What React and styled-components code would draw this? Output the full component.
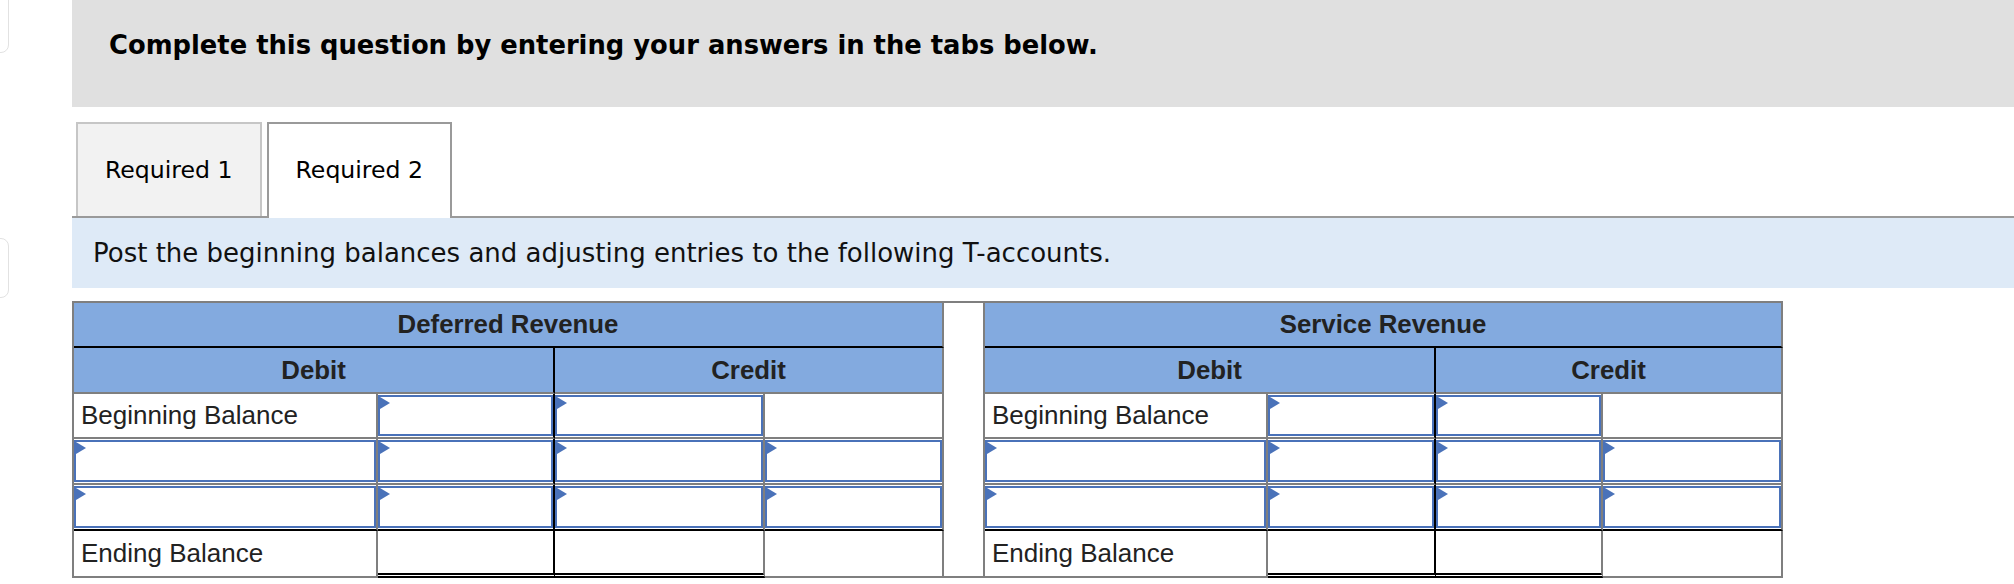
import React from "react";
import styled, { createGlobalStyle } from "styled-components";

const GlobalStyle = createGlobalStyle`
  html, body {
    margin: 0;
    padding: 0;
    background: #fff;
  }
  body {
    font-family: "DejaVu Sans", Verdana, sans-serif;
    overflow: hidden;
  }
`;

const Page = styled.div`
  display: flex;
  align-items: flex-start;
  width: 2014px;
`;

const Rail = styled.div`
  width: 72px;
  flex-shrink: 0;
  display: flex;
  flex-direction: column;
`;

const RailCard = styled.div`
  box-sizing: border-box;
  width: 49px;
  height: ${(p) => p.$h}px;
  margin-left: -40px;
  margin-top: ${(p) => p.$top}px;
  border: 1px solid #e2e2e2;
  border-radius: 8px;
  background: #fff;
`;

const Main = styled.div`
  flex: 1;
  min-width: 0;
`;

const Banner = styled.div`
  box-sizing: border-box;
  height: 107px;
  padding: 30px 0 0 37px;
  background: #e0e0e0;
  font-size: 25.8px;
  line-height: 30px;
  font-weight: bold;
  color: #000;
`;

const TabBar = styled.div`
  display: flex;
  align-items: flex-end;
  gap: 5px;
  margin-top: 15px;
  padding-left: 4px;
  border-bottom: 2px solid #9a9a9a;
`;

const Tab = styled.div`
  box-sizing: border-box;
  display: flex;
  align-items: center;
  height: ${(p) => (p.$active ? 96 : 94)}px;
  margin-bottom: ${(p) => (p.$active ? -2 : 0)}px;
  padding: 0 27px ${(p) => (p.$active ? 2 : 0)}px;
  border: 2px solid ${(p) => (p.$active ? "#9a9a9a" : "#c6c6c6")};
  border-bottom: none;
  background: ${(p) => (p.$active ? "#fff" : "#f2f2f2")};
  font-size: 23.6px;
  color: #000;
`;

const Prompt = styled.div`
  box-sizing: border-box;
  display: flex;
  align-items: center;
  height: 70px;
  padding-left: 21px;
  background: #deeaf7;
  font-size: 26px;
  color: #111;
`;

const TGrid = styled.div`
  display: grid;
  grid-template-columns: 304px 177px 210px 179px 41px 283px 168px 167px 180px;
  grid-template-rows: 45px 46px 45px 46px 46px 47px;
  width: max-content;
  margin-top: 13px;
  border-top: 2px solid #7f7f7f;
  border-left: 2px solid #7f7f7f;
  font-family: "Liberation Sans", Arial, sans-serif;
  font-size: 26px;
  color: #222;
`;

const Cell = styled.div`
  box-sizing: border-box;
  display: flex;
  align-items: center;
  min-width: 0;
  white-space: nowrap;
  background: #fff;
  border-right: 2px solid ${(p) => (p.$divider ? "#000" : "#7f7f7f")};
  border-bottom: ${(p) =>
    p.$double ? "5px double #000" : `2px solid ${p.$rule ? "#000" : "#7f7f7f"}`};
  padding: ${(p) => (p.$field ? "1px 0 1px 0" : "0 0 0 7px")};
`;

const HeadCell = styled(Cell)`
  grid-column: span ${(p) => p.$span};
  justify-content: center;
  padding: 0;
  background: #83aadf;
  font-weight: bold;
  font-size: 25.8px;
`;

const Spacer = styled.div`
  grid-column: 5;
  grid-row: 1 / span 6;
  box-sizing: border-box;
  background: #fff;
  border-right: 2px solid #7f7f7f;
  border-bottom: 2px solid #7f7f7f;
`;

const FieldWrap = styled.div`
  position: relative;
  width: 100%;
  height: 100%;
`;

const Field = styled.input`
  box-sizing: border-box;
  display: block;
  width: 100%;
  height: 100%;
  margin: 0;
  padding: 0 12px;
  border: 2px solid #4a72b9;
  border-radius: 0;
  background: #fff;
  font: inherit;
  outline: none;
`;

const Flag = styled.span`
  position: absolute;
  top: 2px;
  left: 2px;
  width: 0;
  height: 0;
  border-top: 6px solid transparent;
  border-bottom: 6px solid transparent;
  border-left: 10px solid #4a72b9;
  pointer-events: none;
`;

function InputCell(props) {
  return (
    <Cell $field {...props}>
      <FieldWrap>
        <Field type="text" />
        <Flag />
      </FieldWrap>
    </Cell>
  );
}

const accounts = ["Deferred Revenue", "Service Revenue"];

function bodyRow(kind, name) {
  if (kind === "begin") {
    return [
      <Cell key={name + "b1"}>Beginning Balance</Cell>,
      <InputCell key={name + "b2"} $divider />,
      <InputCell key={name + "b3"} />,
      <Cell key={name + "b4"} />,
    ];
  }
  if (kind === "end") {
    return [
      <Cell key={name + "e1"}>Ending Balance</Cell>,
      <Cell key={name + "e2"} $divider $double />,
      <Cell key={name + "e3"} $double />,
      <Cell key={name + "e4"} />,
    ];
  }
  const last = kind === "entry2";
  return [1, 2, 3, 4].map((c) => (
    <InputCell key={name + kind + c} $divider={c === 2} $rule={last} />
  ));
}

function TAccounts() {
  return (
    <TGrid>
      <HeadCell $span={4} $rule>{accounts[0]}</HeadCell>
      <Spacer />
      <HeadCell $span={4} $rule>{accounts[1]}</HeadCell>
      {accounts.map((name) => [
        <HeadCell key={name + "d"} $span={2} $divider>Debit</HeadCell>,
        <HeadCell key={name + "c"} $span={2}>Credit</HeadCell>,
      ])}
      {["begin", "entry1", "entry2", "end"].map((kind) =>
        accounts.map((name) => bodyRow(kind, name))
      )}
    </TGrid>
  );
}

export default function App() {
  return (
    <Page>
      <GlobalStyle />
      <Rail>
        <RailCard $top={-8} $h={61} />
        <RailCard $top={185} $h={60} />
      </Rail>
      <Main>
        <Banner>Complete this question by entering your answers in the tabs below.</Banner>
        <TabBar>
          <Tab>Required 1</Tab>
          <Tab $active>Required 2</Tab>
        </TabBar>
        <Prompt>Post the beginning balances and adjusting entries to the following T-accounts.</Prompt>
        <TAccounts />
      </Main>
    </Page>
  );
}
